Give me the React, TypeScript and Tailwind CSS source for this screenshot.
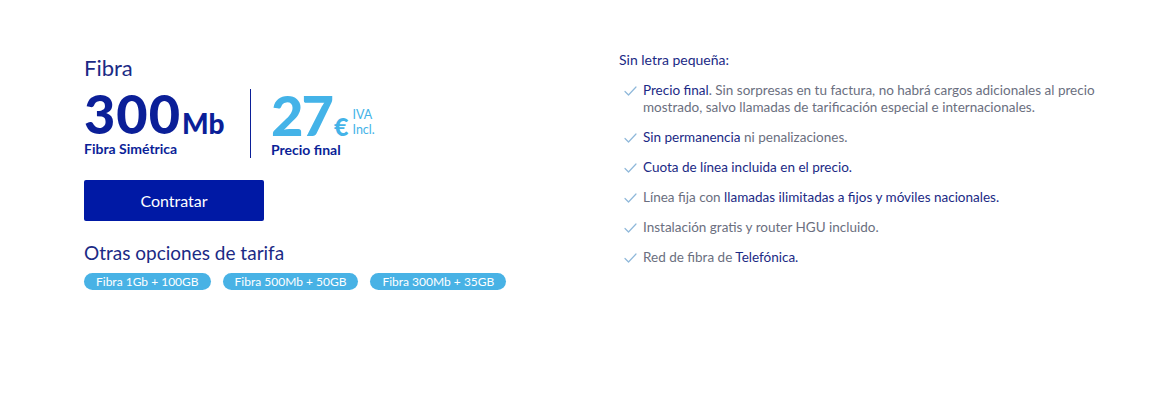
type Feature = {
  id: string
  parts: { text: string; strong?: boolean }[]
}

const otherTariffs = ["Fibra 1Gb + 100GB", "Fibra 500Mb + 50GB", "Fibra 300Mb + 35GB"]

const features: Feature[] = [
  {
    id: "precio",
    parts: [
      { text: "Precio final", strong: true },
      {
        text: ". Sin sorpresas en tu factura, no habrá cargos adicionales al precio mostrado, salvo llamadas de tarificación especial e internacionales.",
      },
    ],
  },
  {
    id: "permanencia",
    parts: [{ text: "Sin permanencia", strong: true }, { text: " ni penalizaciones." }],
  },
  {
    id: "cuota",
    parts: [{ text: "Cuota de línea incluida en el precio.", strong: true }],
  },
  {
    id: "fija",
    parts: [
      { text: "Línea fija con " },
      { text: "llamadas ilimitadas a fijos y móviles nacionales.", strong: true },
    ],
  },
  {
    id: "instalacion",
    parts: [{ text: "Instalación gratis y router HGU incluido." }],
  },
  {
    id: "red",
    parts: [{ text: "Red de fibra de " }, { text: "Telefónica.", strong: true }],
  },
]

const CheckMark = () => (
  <svg
    viewBox="0 0 13 10"
    className="mt-[4px] h-[10px] w-[13px] shrink-0"
    fill="none"
    stroke="#8fb8da"
    strokeWidth={1.2}
    strokeLinecap="round"
    strokeLinejoin="round"
  >
    <polyline points="1,5.5 4.5,9 12,1" />
  </svg>
)

const App = () => {
  return (
    <div className="min-h-[396px] w-full bg-white font-['Lato',sans-serif]">
      <div className="flex pl-[84px] pt-[51px]">
        {/* left: tariff */}
        <div className="w-[535px] shrink-0 pt-[4px]">
          <h2 className="text-[22px] leading-[26px] text-[#1b2a85]">Fibra</h2>

          <div className="mt-[8px] flex items-stretch">
            <div className="flex w-[166px] flex-col">
              <div className="mt-[-2px] flex items-baseline text-[#0b1f98]">
                <span className="text-[54px] font-black leading-none tracking-[1px]">300</span>
                <span className="ml-[1px] text-[28px] font-black leading-none">Mb</span>
              </div>
              <span className="mt-0 text-[14px] font-bold leading-[16px] text-[#0b1f98]">
                Fibra Simétrica
              </span>
            </div>

            <div className="w-px bg-[#0b1f98]" />

            <div className="ml-[20px] flex flex-col">
              <div className="mt-[-2px] flex items-baseline text-[#44b3e8]">
                <span className="text-[56px] font-black leading-none tracking-[-2px]">27</span>
                <span className="ml-[2px] text-[25px] font-black leading-none">€</span>
                <span className="ml-[4px] flex flex-col self-end pb-[6px] text-[12.5px] font-normal leading-[15px]">
                  <span>IVA</span>
                  <span>Incl.</span>
                </span>
              </div>
              <span className="mt-[-1px] text-[14px] font-bold leading-[16px] text-[#0b1f98]">
                Precio final
              </span>
            </div>
          </div>

          <button className="mt-[22px] flex h-[41px] w-[180px] items-center justify-center rounded-[2px] bg-[#0019a5] text-[16px] text-white">
            Contratar
          </button>

          <h3 className="mt-[20px] text-[19px] leading-[24px] text-[#1b2a85]">
            Otras opciones de tarifa
          </h3>

          <div className="mt-[8px] flex gap-[12px]">
            {otherTariffs.map((tariff) => (
              <span
                key={tariff}
                className="flex h-[17px] items-center rounded-full bg-[#48b2e5] px-[12px] text-[12px] leading-none text-white"
              >
                {tariff}
              </span>
            ))}
          </div>
        </div>

        {/* right: conditions */}
        <div className="w-[500px]">
          <p className="text-[14px] leading-[18px] text-[#1b2a85]">Sin letra pequeña:</p>
          <ul className="mt-[13px] flex flex-col gap-[13px]">
            {features.map((feature) => (
              <li key={feature.id} className="flex items-start">
                <span className="ml-[5px]">
                  <CheckMark />
                </span>
                <p className="ml-[6px] w-[470px] text-[13.5px] leading-[17px] text-[#6b6f80]">
                  {feature.parts.map((part, i) => (
                    <span key={i} className={part.strong ? "text-[#1b2a85]" : undefined}>
                      {part.text}
                    </span>
                  ))}
                </p>
              </li>
            ))}
          </ul>
        </div>
      </div>
    </div>
  )
}

export default App
